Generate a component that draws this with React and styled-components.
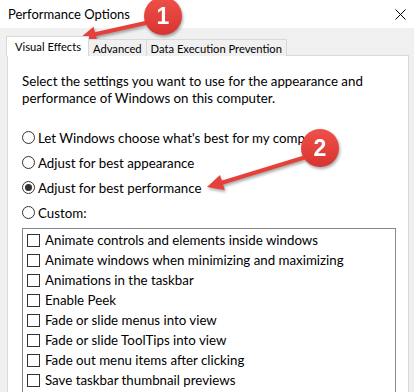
import React from "react";
import styled, { createGlobalStyle } from "styled-components";

const Global = createGlobalStyle`
  html, body { margin: 0; padding: 0; background: #f0f0f0; }
  body { font-family: "Lato", "Noto Sans", sans-serif; color: #000; }
`;

const Window = styled.div`
  position: relative;
  width: 414px;
  height: 392px;
  overflow: hidden;
  background: #f0f0f0;
`;

const TitleBar = styled.div`
  height: 28px;
  background: #fff;
  display: flex;
  align-items: center;
  justify-content: space-between;
  padding: 0 8px 0 8px;
  box-sizing: border-box;
`;

const Title = styled.span`
  font-size: 13px;
  color: #000;
`;

const Close = styled.svg`
  width: 11px;
  height: 11px;
`;

const Main = styled.div`
  padding: 8px 5px 0 7px;
`;

const Tabs = styled.div`
  display: flex;
  align-items: flex-end;
  height: 20px;
  margin-bottom: -1px;
  position: relative;
  z-index: 1;
`;

const Tab = styled.div`
  box-sizing: border-box;
  display: flex;
  align-items: ${(p) => (p.$active ? "flex-start" : "center")};
  font-size: 11.2px;
  white-space: nowrap;
  border: 1px solid #d9d9d9;
  border-bottom: none;
  background: ${(p) => (p.$active ? "#fff" : "#f0f0f0")};
  height: ${(p) => (p.$active ? "20px" : "17px")};
  padding: ${(p) => (p.$active ? "1px 7px 0 8px" : "0 4px 0 4px")};
  margin-left: -1px;
  line-height: 17px;
`;

const Panel = styled.div`
  background: #fff;
  border: 1px solid #d9d9d9;
  height: 400px;
  box-sizing: border-box;
  padding: 17px 12px 0 14px;
`;

const Description = styled.p`
  margin: 0;
  font-size: 13.3px;
  line-height: 17px;
`;

const Options = styled.div`
  margin-top: 18px;
  display: flex;
  flex-direction: column;
`;

const RadioRow = styled.label`
  display: flex;
  align-items: center;
  height: 25px;
  font-size: 13.3px;
  gap: 3px;
`;

const Radio = styled.span`
  box-sizing: border-box;
  width: 13px;
  height: 13px;
  border-radius: 50%;
  border: 1px solid #333;
  display: flex;
  align-items: center;
  justify-content: center;
  flex: none;
  &::after {
    content: "";
    display: ${(p) => (p.$checked ? "block" : "none")};
    width: 7px;
    height: 7px;
    border-radius: 50%;
    background: #333;
  }
`;

const ListBox = styled.div`
  margin-top: 3px;
  border: 1px solid #828790;
  padding: 1px 0 0 4px;
  height: 200px;
`;

const CheckRow = styled.label`
  display: flex;
  align-items: center;
  height: 20px;
  font-size: 13.3px;
  gap: 5px;
`;

const Box = styled.span`
  box-sizing: border-box;
  width: 13px;
  height: 13px;
  border: 1px solid #333;
  background: #fff;
  flex: none;
`;

const Overlay = styled.svg`
  position: absolute;
  left: 0;
  top: 0;
  width: 414px;
  height: 392px;
  pointer-events: none;
  filter: drop-shadow(1px 2px 1.5px rgba(0, 0, 0, 0.35));
`;

const radios = [
  "Let Windows choose what's best for my computer",
  "Adjust for best appearance",
  "Adjust for best performance",
  "Custom:",
];

const checks = [
  "Animate controls and elements inside windows",
  "Animate windows when minimizing and maximizing",
  "Animations in the taskbar",
  "Enable Peek",
  "Fade or slide menus into view",
  "Fade or slide ToolTips into view",
  "Fade out menu items after clicking",
  "Save taskbar thumbnail previews",
];

function Marker({ cx, cy, n }) {
  return (
    <g>
      <circle cx={cx} cy={cy} r="19" fill="url(#redg)" />
      <text
        x={cx}
        y={cy + 8}
        textAnchor="middle"
        fontFamily="Liberation Sans, Arial, sans-serif"
        fontWeight="700"
        fontSize="23"
        fill="#fff"
      >
        {n}
      </text>
    </g>
  );
}

export default function App() {
  return (
    <Window>
      <Global />
      <TitleBar>
        <Title>Performance Options</Title>
        <Close viewBox="0 0 11 11">
          <path d="M0.5 0.5 L10.5 10.5 M10.5 0.5 L0.5 10.5" stroke="#000" strokeWidth="1" fill="none" />
        </Close>
      </TitleBar>
      <Main>
        <Tabs>
          <Tab $active>Visual Effects</Tab>
          <Tab>Advanced</Tab>
          <Tab>Data Execution Prevention</Tab>
        </Tabs>
        <Panel>
          <Description>
            Select the settings you want to use for the appearance and
            <br />
            performance of Windows on this computer.
          </Description>
          <Options>
            {radios.map((r, i) => (
              <RadioRow key={r}>
                <Radio $checked={i === 2} />
                {r}
              </RadioRow>
            ))}
          </Options>
          <ListBox>
            {checks.map((c) => (
              <CheckRow key={c}>
                <Box />
                {c}
              </CheckRow>
            ))}
          </ListBox>
        </Panel>
      </Main>
      <Overlay viewBox="0 0 414 392">
        <defs>
          <linearGradient id="redg" x1="0" y1="0" x2="0" y2="1">
            <stop offset="0" stopColor="#f0504a" />
            <stop offset="1" stopColor="#d8342f" />
          </linearGradient>
        </defs>
        <line x1="150" y1="22" x2="94" y2="34.5" stroke="#e5403a" strokeWidth="4" strokeLinecap="round" />
        <polygon points="80,38 93.5,26.8 97.7,42" fill="#e5403a" />
        <Marker cx={163} cy={16} n="1" />
        <line x1="306" y1="157" x2="221" y2="183" stroke="#e5403a" strokeWidth="4" strokeLinecap="round" />
        <polygon points="207,187 220,175 224.8,190" fill="#e5403a" />
        <Marker cx={320} cy={148} n="2" />
      </Overlay>
    </Window>
  );
}
